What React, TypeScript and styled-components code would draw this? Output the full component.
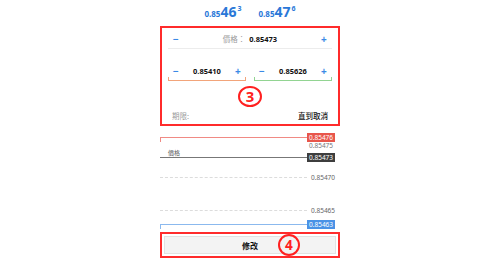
import React from "react";
import styled, { createGlobalStyle } from "styled-components";

const Global = createGlobalStyle`
    html, body {
        margin: 0;
        padding: 0;
        background: #ffffff;
        font-family: "Noto Sans", "Noto Sans CJK TC", sans-serif;
    }
`;

const Page = styled.div`
    width: 500px;
    height: 260px;
    display: flex;
    justify-content: center;
    overflow: hidden;
`;

const Column = styled.div`
    width: 180px;
    display: flex;
    flex-direction: column;
`;

const Quotes = styled.div`
    height: 26px;
    display: flex;
    justify-content: center;
    align-items: center;
    gap: 17px;
    padding-bottom: 2px;
    box-sizing: border-box;
`;

const Quote = styled.span`
    color: #2a78d8;
    font-weight: 700;
    display: flex;
    align-items: baseline;
    line-height: 1;
`;

const QuoteSmall = styled.span`
    font-size: 8px;
`;

const QuoteBig = styled.span`
    font-size: 14px;
`;

const QuoteSup = styled.span`
    font-size: 7px;
    position: relative;
    top: -6px;
    margin-left: 1px;
`;

const Marked = styled.div`
    position: relative;
    border: 2px solid #ff2b2b;
    box-sizing: border-box;
`;

const Form = styled(Marked)`
    height: 100px;
    padding: 0 6px;
    display: flex;
    flex-direction: column;
`;

const PriceRow = styled.div`
    height: 22px;
    margin-top: 1px;
    display: flex;
    align-items: center;
    justify-content: space-between;
    padding: 0 4px;
    border-bottom: 1px solid #ececec;
`;

const Step = styled.span`
    color: #3a8ae6;
    font-weight: 700;
    font-size: 10px;
    line-height: 1;
    width: 8px;
    text-align: center;
`;

const PriceText = styled.div`
    display: flex;
    align-items: center;
    gap: 4px;
    font-size: 7.5px;
`;

const Muted = styled.span`
    color: #9a9a9a;
`;

const Strong = styled.span<{ $weight?: number }>`
    color: #111;
    font-weight: ${(p) => p.$weight || 700};
`;

const Pair = styled.div`
    margin-top: 12px;
    display: flex;
    justify-content: space-between;
`;

const Field = styled.div<{ $tone: string }>`
    width: 78px;
    height: 20px;
    display: flex;
    align-items: center;
    justify-content: space-between;
    padding: 0 4px 1px;
    box-sizing: border-box;
    position: relative;

    &::after {
        content: "";
        position: absolute;
        left: 0;
        right: 0;
        bottom: 0;
        height: 3px;
        border: 1px solid ${(p) => p.$tone};
        border-top: none;
    }
`;

const Badge = styled.div<{ $size: number }>`
    width: ${(p) => p.$size}px;
    height: ${(p) => p.$size}px;
    border: 2px solid #ff2020;
    border-radius: 50%;
    box-sizing: border-box;
    color: #ff2020;
    font-weight: 700;
    font-size: ${(p) => p.$size * 0.62}px;
    display: flex;
    align-items: center;
    justify-content: center;
    line-height: 1;
`;

const FormBadge = styled(Badge)`
    margin: 5px auto 0;
`;

const Expiry = styled.div`
    margin-top: auto;
    height: 18px;
    display: flex;
    align-items: center;
    justify-content: space-between;
    padding: 0 4px 1px;
    font-size: 7.5px;
`;

const Chart = styled.div`
    position: relative;
    height: 106px;
`;

const Level = styled.div<{ $line: string; $dashed?: boolean; $tick?: boolean }>`
    position: absolute;
    left: 0;
    right: 0;
    height: 0;
    display: flex;
    align-items: center;

    &::before {
        content: "";
        flex: 0 0 147px;
        border-top: 1px ${(p) => (p.$dashed ? "dashed" : "solid")} ${(p) => p.$line};
    }

    &::after {
        content: "";
        display: ${(p) => (p.$tick ? "block" : "none")};
        position: absolute;
        left: 0;
        top: 0;
        height: 5px;
        border-left: 1px solid ${(p) => p.$line};
    }
`;

const Tag = styled.span<{ $bg?: string }>`
    font-size: 6.5px;
    line-height: 9px;
    padding: 0 2px;
    margin-left: ${(p) => (p.$bg ? "0" : "2px")};
    color: ${(p) => (p.$bg ? "#fff" : "#666")};
    background: ${(p) => p.$bg || "transparent"};
    white-space: nowrap;
`;

const LineName = styled.span`
    position: absolute;
    left: 8px;
    bottom: 0;
    font-size: 6px;
    line-height: 8px;
    color: #555;
`;

const SubTag = styled.span`
    position: absolute;
    left: 149px;
    font-size: 6.5px;
    line-height: 9px;
    color: #777;
`;

const SubmitBox = styled(Marked)`
    height: 26px;
    padding: 2px;
`;

const Submit = styled.button`
    width: 100%;
    height: 100%;
    border: 1px solid #e2e2e2;
    background: #f3f3f3;
    font-family: "Noto Sans CJK TC", sans-serif;
    font-weight: 700;
    font-size: 8px;
    color: #111;
    display: flex;
    align-items: center;
    justify-content: center;
    padding: 0;
`;

const SubmitBadge = styled(Badge)`
    position: absolute;
    left: 116px;
    top: 0px;
`;

const top = 11;
const scale = 6.667;
const yOf = (p: number) => top + Math.round((0.85476 - p) * 100000 * scale);

const levels = [
    { price: 0.85476, line: "#f08a84", tag: "0.85476", bg: "#e8564b", tick: true },
    { price: 0.85473, line: "#777", tag: "0.85473", bg: "#3e3e3e", name: "價格" },
    { price: 0.8547, line: "#dcdcdc", tag: "0.85470", dashed: true },
    { price: 0.85465, line: "#dcdcdc", tag: "0.85465", dashed: true },
    { price: 0.85463, line: "#8bb9ee", tag: "0.85463", bg: "#4a92e6", tick: true },
];

export default function App() {
    return (
        <Page>
            <Global />
            <Column>
                <Quotes>
                    <Quote>
                        <QuoteSmall>0.85</QuoteSmall>
                        <QuoteBig>46</QuoteBig>
                        <QuoteSup>3</QuoteSup>
                    </Quote>
                    <Quote>
                        <QuoteSmall>0.85</QuoteSmall>
                        <QuoteBig>47</QuoteBig>
                        <QuoteSup>6</QuoteSup>
                    </Quote>
                </Quotes>
                <Form>
                    <PriceRow>
                        <Step>−</Step>
                        <PriceText>
                            <Muted>價格：</Muted>
                            <Strong>0.85473</Strong>
                        </PriceText>
                        <Step>+</Step>
                    </PriceRow>
                    <Pair>
                        <Field $tone="#f2a47a">
                            <Step>−</Step>
                            <PriceText><Strong>0.85410</Strong></PriceText>
                            <Step>+</Step>
                        </Field>
                        <Field $tone="#92d492">
                            <Step>−</Step>
                            <PriceText><Strong>0.85626</Strong></PriceText>
                            <Step>+</Step>
                        </Field>
                    </Pair>
                    <FormBadge $size={24}>3</FormBadge>
                    <Expiry>
                        <Muted>期限:</Muted>
                        <Strong $weight={500}>直到取消</Strong>
                    </Expiry>
                </Form>
                <Chart>
                    {levels.map((l) => (
                        <Level
                            key={l.tag}
                            $line={l.line}
                            $dashed={l.dashed}
                            $tick={l.tick}
                            style={{ top: yOf(l.price) }}
                        >
                            {l.name && <LineName>{l.name}</LineName>}
                            <Tag $bg={l.bg}>{l.tag}</Tag>
                        </Level>
                    ))}
                    <SubTag style={{ top: yOf(0.85476) + 4 }}>0.85475</SubTag>
                </Chart>
                <SubmitBox>
                    <Submit>修改</Submit>
                    <SubmitBadge $size={22}>4</SubmitBadge>
                </SubmitBox>
            </Column>
        </Page>
    );
}
